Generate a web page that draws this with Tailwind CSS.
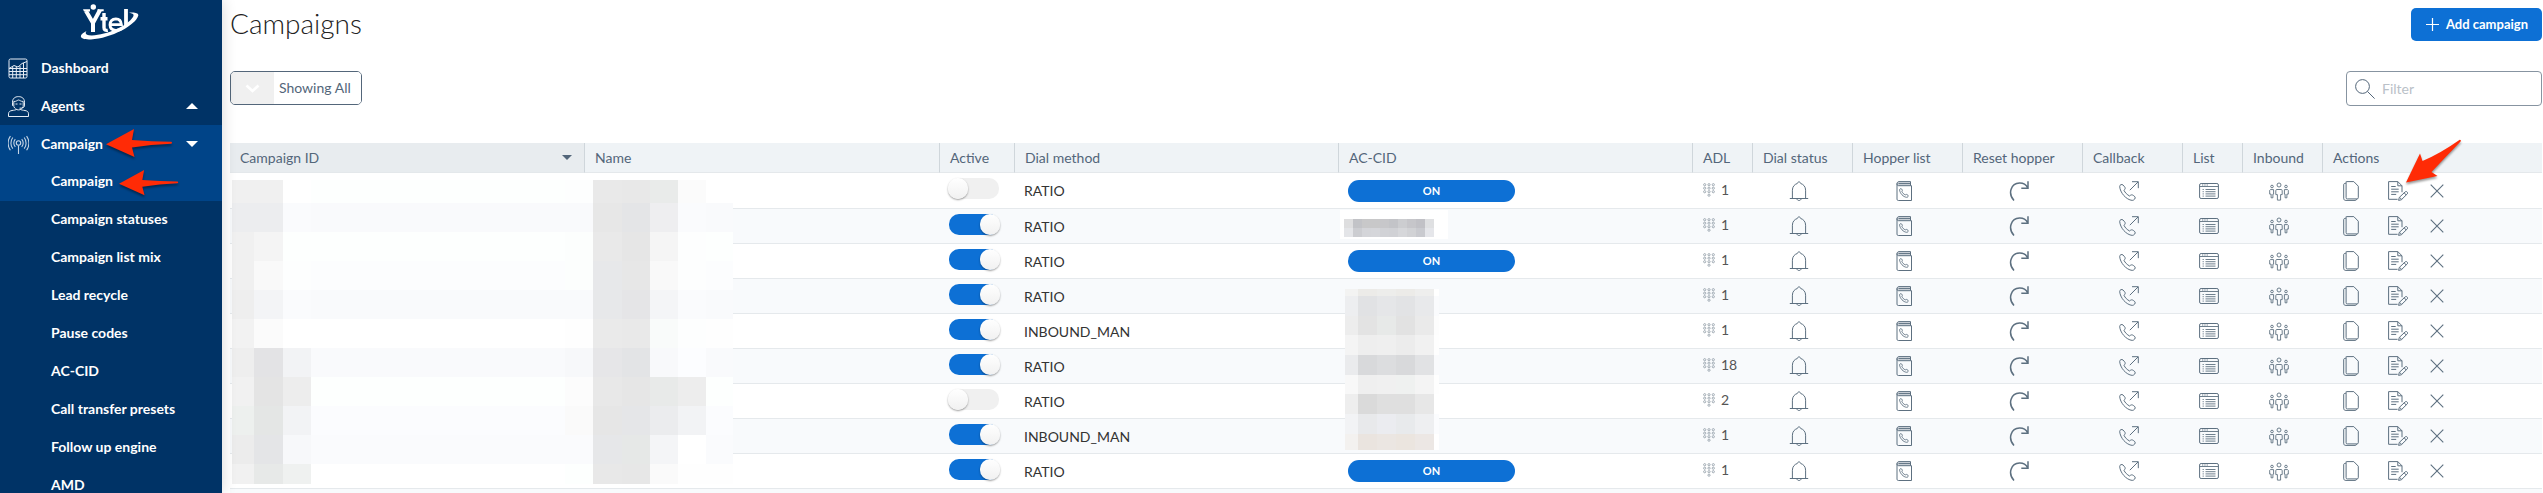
<!DOCTYPE html>
<html lang="en">

<head>
    <meta charset="UTF-8">
    <meta name="viewport" content="width=device-width, initial-scale=1.0">
    <title>Campaigns</title>
    <script src="https://cdn.jsdelivr.net/npm/@tailwindcss/browser@4"></script>
</head>

<body class="relative flex h-screen overflow-hidden bg-white font-['Lato',sans-serif] text-sm text-[#53667a]">
    <!-- Icon sprite -->
    <svg class="hidden">
        <symbol id="i-keypad" viewBox="0 0 12 14">
            <g fill="none" stroke="currentColor" stroke-width=".8">
                <circle cx="1.7" cy="1.7" r="1.1" /><circle cx="6" cy="1.7" r="1.1" /><circle cx="10.3" cy="1.7" r="1.1" />
                <circle cx="1.7" cy="5.2" r="1.1" /><circle cx="6" cy="5.2" r="1.1" /><circle cx="10.3" cy="5.2" r="1.1" />
                <circle cx="1.7" cy="8.7" r="1.1" /><circle cx="6" cy="8.7" r="1.1" /><circle cx="10.3" cy="8.7" r="1.1" />
                <circle cx="6" cy="12.2" r="1.1" />
            </g>
        </symbol>
        <symbol id="i-bell" viewBox="0 0 20 20">
            <path d="M.8 17.500h18.400M3.400 17.300V9.200C3.400 5.600 5.600 3.300 8.300 2.500 8.600 1.400 9.200.9 10 .9s1.400.5 1.700 1.600c2.700.8 4.900 3.100 4.900 6.700v8.100M7.800 17.700c.2 1.100 1.100 1.800 2.200 1.800s2-.7 2.200-1.800" fill="none" stroke="currentColor" />
        </symbol>
        <symbol id="i-phonebook" viewBox="0 0 20 20">
            <path d="M4.600 4.700C3.600 4.700 3 4 3 2.900 3 1.500 3.800.6 5 .6h11.500v4z" fill="#d3d9de" />
            <path d="M3 2.400v15.800c0 .8.5 1.300 1.300 1.300h13.200V4.700H4.600C3.600 4.700 3 4 3 2.900 3 1.500 3.800.6 5 .6h11.500v4M4.500 2.600h11.800" fill="none" stroke="currentColor" />
            <path d="M5.600 9.100c-.2-1.200 1.300-2 2.100-1 .7.900.9 1.500.2 2.200.4 1.500 1.900 2.900 3.400 3.600.9-.9 1.700-.5 2.600.3.900.9-.1 2.200-1.300 2.100-3.300-.3-6.600-3.900-7-7.200z" fill="none" stroke="currentColor" stroke-width=".9" />
        </symbol>
        <symbol id="i-reset" viewBox="0 0 20 20">
            <path d="M5 19.500C-1.500 12.500 2 2.200 10.500 2c3.500-.1 6.500 1.500 8 4.500M19 .3v6.900h-6.700" fill="none" stroke="currentColor" stroke-width="1.500" />
        </symbol>
        <symbol id="i-callback" viewBox="0 0 20 20">
            <path d="M.7 5.300C.5 4 2.900 2.800 4 4c2.800 2.900 2.700 3.300 1 5.300 1 2.300 3.200 4.500 5.600 5.700 1.800-1.700 2.900-1.600 5.300.8 1.100 1.200-.7 3.600-2.700 3.600C7.200 18.800.9 11.600.7 5.300zM10.800 9.200l8.300-8.300M13 .7h6.300v6.500" fill="none" stroke="currentColor" />
        </symbol>
        <symbol id="i-list" viewBox="0 0 20 20">
            <rect x=".6" y="2.500" width="18.800" height="15" rx="1.500" fill="none" stroke="currentColor" />
            <path d="M.6 5.500h18.800M3 4h1.300M5.300 4h1.300M7.600 4h1.300M3.600 8.500h1.200M6.500 8.500h10M3.600 10.700h1.200M6.500 10.700h10M3.600 12.900h1.200M6.500 12.900h10M3.600 15.100h1.200M6.500 15.100h10" fill="none" stroke="currentColor" stroke-width=".9" />
        </symbol>
        <symbol id="i-inbound" viewBox="0 0 20 20">
            <g fill="none" stroke="currentColor" stroke-width=".9">
                <circle cx="10" cy="4" r="2" /><circle cx="3" cy="5.500" r="1.300" /><circle cx="17" cy="5.500" r="1.300" />
                <path d="M7.900 8.500h4.200c.7 0 1.100.4 1.100 1.100v4h-1.600v5.500H8.400v-5.500H6.800v-4c0-.7.4-1.100 1.100-1.100z" />
                <path d="M1.400 8.600h3.200v4.500h-.7v3.700H2.100v-3.700H.7V9.300zM18.600 8.600h-3.200v4.500h.7v3.700h1.800v-3.700h1.400V9.300z" />
            </g>
        </symbol>
        <symbol id="i-copy" viewBox="0 0 16 20">
            <path d="M3.300.6h7.500l4.500 4.600v11.500c0 .8-.4 1.200-1.200 1.200H4.300c-.8 0-1.200-.4-1.200-1.200V.6M2.900 2.300C1.300 2.300.7 2.600.7 3.900v13.300c0 1.600.7 2.200 2.200 2.200h9.300c.9 0 1.300-.5 1.300-1.300" fill="none" stroke="currentColor" />
        </symbol>
        <symbol id="i-edit" viewBox="0 0 20 20">
            <path d="M9.600 18.300H.6V.6h9.200l4.200 4.200v6.400M9.800.6v4.200H14M3.200 5.500h4.500M3.200 8.200h7.500M3.200 10.800h7.500M3.200 13.400h5M10.600 19.400l.7-3 6-5.600c1.200-1 3.200 1 2 2.100l-6 5.900zM11.600 16.300l2 2.100M16.200 11.800l2 2.200" fill="none" stroke="currentColor" />
        </symbol>
        <symbol id="i-x" viewBox="0 0 14 14">
            <path d="M.7.700l12.600 12.600M13.300.7.700 13.300" fill="none" stroke="currentColor" stroke-width="1.100" />
        </symbol>
        <symbol id="i-arrow" viewBox="0 0 68 30">
            <path d="M0 15.300 28 0l-2 11q20 1.500 39 1.700a1 1 0 0 1 0 2Q45 15.500 26 18.500L28.500 28z" fill="#ff2b06" />
        </symbol>
    </svg>

    <aside class="z-10 w-[222px] shrink-0 overflow-hidden bg-[#003366] font-bold text-white shadow-[0_0_14px_rgba(0,0,0,0.16)]">
        <div class="flex h-[49px] justify-center pt-1 pr-0.5">
            <svg class="h-9 w-[60px]" viewBox="0 0 60 36" role="img" aria-label="Ytel">
                <g fill="none" stroke="#fff" stroke-width="4">
                    <path d="M6 7 13 19 20 6M13 18v10" />
                    <path d="M24 9v14.500q0 3.500 3.800 2.800M20.500 14.700h7" stroke-width="3.400" />
                    <path d="M30 20.600h11.400q-.4-5.600-5.500-5.700-5.700.3-5.900 6 .2 5.600 6.200 5.400 2.800 0 5.300-1.500" stroke-width="2.800" />
                    <path d="M46 5v16.500" stroke-width="3.800" />
                </g>
                <circle cx="13.300" cy="3" r="2.700" fill="#fff" />
                <path d="M3 5.200h7V7.500H4zM17.500 5.200h6.200v2h-6z" fill="#fff" />
                <path d="M6.500 27C-2.500 31.500-.5 36 11 35.400 31 34.500 56 21 58.300 11.500c.3-2.600-4.300-3.500-9.300-2.700 4.800.6 5.300 2 3.800 4.500C47.500 21.800 27 31 12 31.400c-6 .1-7.500-1.800-5.500-4.400z" fill="#fff" />
            </svg>
        </div>
        <nav>
            <a href="#" class="flex h-[38px] items-center pl-2">
                <svg class="mr-3 h-[21px] w-[21px]" viewBox="0 0 21 21" fill="none" stroke="#e6edf5">
                    <rect x="1" y="1" width="18" height="19" rx="1.500" />
                    <path d="M1 10.500l5-3 4 1.500 4-3.500 5-2M1 13.500h18M1 16.700h18M4.700 8.500V20M8.300 8.500V20M12 8v12M15.500 5v15M1 10.500h18" />
                </svg>
                Dashboard
            </a>
            <a href="#" class="flex h-[38px] items-center pl-2">
                <svg class="mr-3 h-[21px] w-[21px]" viewBox="0 0 21 21" fill="none" stroke="#e6edf5">
                    <path d="M.5 20.500v-2.700c0-2 1.500-3 3.500-3.300 2-.3 3.800-.4 4.300-1.200M20.500 20.500v-2.700c0-2-1.500-3-3.500-3.300-2-.3-3.800-.4-4.300-1.200M.5 20.500h20M4.500 9.800V6.200C4.500 2.500 7 .6 10.500.6s6 1.900 6 5.600v3.600M5.500 5.500c3 .2 4-1.500 5-1.500s2 1.500 5 1.500M5.800 6v4.500c1 2.300 2.600 3.400 4.700 3.400s3.700-1.100 4.700-3.400V6M16.500 9.500c0 2-1.500 2.700-5 2.700M7.500 8h2M11.500 8h2" />
                </svg>
                <span class="flex-1">Agents</span>
                <svg class="mr-6 h-[6px] w-[12px]" viewBox="0 0 12 6"><path d="M6 0l6 6H0z" fill="#fff" /></svg>
            </a>
            <div class="bg-[#004488]">
                <a href="#" class="flex h-[38px] items-center pl-2">
                    <svg class="mr-3 h-[21px] w-[21px]" viewBox="0 0 21 21" fill="none" stroke="#c5d5e6" stroke-width="1.100">
                        <circle cx="10.500" cy="9" r="2.200" />
                        <path d="M10.500 11.500v8.500M7.300 5.200c-2 2.200-2 5.600 0 7.700M13.700 5.200c2 2.200 2 5.600 0 7.700M4.800 3.500c-2.500 3.300-2.500 8 0 11.200M16.200 3.500c2.500 3.300 2.500 8 0 11.200M2.400 2c-2.800 4.300-2.800 10 0 14.200M18.600 2c2.800 4.300 2.800 10 0 14.200" />
                    </svg>
                    <span class="flex-1">Campaign</span>
                    <svg class="mr-6 h-[6px] w-[12px]" viewBox="0 0 12 6"><path d="M6 6L0 0h12z" fill="#fff" /></svg>
                </a>
                <a href="#" class="flex h-[38px] items-center pb-0.5 pl-[51px]">Campaign</a>
            </div>
            <a href="#" class="flex h-[38px] items-center pb-0.5 pl-[51px]">Campaign statuses</a>
            <a href="#" class="flex h-[38px] items-center pb-0.5 pl-[51px]">Campaign list mix</a>
            <a href="#" class="flex h-[38px] items-center pb-0.5 pl-[51px]">Lead recycle</a>
            <a href="#" class="flex h-[38px] items-center pb-0.5 pl-[51px]">Pause codes</a>
            <a href="#" class="flex h-[38px] items-center pb-0.5 pl-[51px]">AC-CID</a>
            <a href="#" class="flex h-[38px] items-center pb-0.5 pl-[51px]">Call transfer presets</a>
            <a href="#" class="flex h-[38px] items-center pb-0.5 pl-[51px]">Follow up engine</a>
            <a href="#" class="flex h-[38px] items-center pb-0.5 pl-[51px]">AMD</a>
        </nav>
    </aside>

    <main class="min-w-0 flex-1 pr-px pl-2">
        <div class="flex h-[49px] items-start justify-between">
            <h1 class="text-[28px] leading-[46px] font-light text-[#222]">Campaigns</h1>
            <button class="mt-2 flex h-[33px] items-center rounded-[5px] bg-[#0d70d5] pr-[14px] pl-[15px] text-[13px] font-bold text-white">
                <svg class="mr-[7px] h-[13px] w-[13px]" viewBox="0 0 13 13"><path d="M6.500 0v13M0 6.500h13" stroke="#fff" stroke-width="1.200" /></svg>
                Add campaign
            </button>
        </div>

        <div class="mt-[22px] flex h-[35px] items-start justify-between">
            <label class="flex h-[34px] overflow-hidden rounded-[5px] border border-[#53667a]" aria-label="Shown campaigns">
                <span class="flex w-[43px] items-center justify-center bg-[#f0f0f0]">
                    <svg class="h-[9px] w-[15px]" viewBox="0 0 15 9"><path d="M1.500 1.500l6 5.500 6-5.500" fill="none" stroke="#fff" stroke-width="2.600" /></svg>
                </span>
                <select class="w-[87px] appearance-none bg-white pl-[5px] outline-none">
                    <option>Showing All</option>
                </select>
            </label>
            <label class="flex h-[35px] w-[196px] items-center rounded-[4px] border border-[#8794a1] pl-2" aria-label="Filter campaigns">
                <svg class="mr-[7px] h-5 w-5" viewBox="0 0 20 20" fill="none" stroke="#53667a"><circle cx="7.500" cy="7.500" r="6.900" /><path d="M12.400 12.400l7.200 7.200" /></svg>
                <input type="search" placeholder="Filter" class="w-0 flex-1 bg-transparent outline-none placeholder:text-[#bac1c8]">
            </label>
        </div>

        <div class="relative mt-[37px]">
            <table class="w-full table-fixed border-separate border-spacing-0">
                <colgroup>
                    <col class="w-[355px]">
                    <col class="w-[355px]">
                    <col class="w-[75px]">
                    <col class="w-[324px]">
                    <col class="w-[354px]">
                    <col class="w-[60px]">
                    <col class="w-[100px]">
                    <col class="w-[110px]">
                    <col class="w-[120px]">
                    <col class="w-[100px]">
                    <col class="w-[60px]">
                    <col class="w-[80px]">
                    <col>
                </colgroup>
                <thead>
                    <tr class="h-[30px] bg-[#eff3f6] text-left *:border-r *:border-b *:border-b-[#e4e8eb] *:border-r-[#cfd6db] *:pl-[10px] *:font-normal *:last:border-r-0">
                        <th class="bg-[#e8ecef]">
                            <span class="flex items-center justify-between pr-3">Campaign ID
                                <svg class="h-[5px] w-[10px]" viewBox="0 0 10 5"><path d="M0 0h10L5 5z" fill="#53667a" /></svg>
                            </span>
                        </th>
                        <th>Name</th>
                        <th>Active</th>
                        <th>Dial method</th>
                        <th>AC-CID</th>
                        <th>ADL</th>
                        <th>Dial status</th>
                        <th>Hopper list</th>
                        <th>Reset hopper</th>
                        <th>Callback</th>
                        <th>List</th>
                        <th>Inbound</th>
                        <th>Actions</th>
                    </tr>
                </thead>
                <tbody id="rows"></tbody>
            </table>

            <!-- Redacted cells -->
            <div id="mask-ids" class="absolute top-[37px] left-[2px] grid grid-cols-[22px_29px_28px_254px_28px_29px_28px_28px_28px_27px] grid-rows-[23px_29px_29px_29px_29px_29px_29px_29px_29px_29px_20px]"></div>
            <div class="absolute top-[67px] left-[1110px] h-[29px] w-[108px] bg-white pt-[9px] pl-[4px]">
                <div id="mask-number" class="grid w-[90px] grid-cols-[repeat(10,9px)] grid-rows-[9px_9px]"></div>
            </div>
            <div id="mask-numbers" class="absolute top-[146px] left-[1115px] grid grid-cols-[13px_19px_19px_19px_19px_5px] grid-rows-[7px_20px_19px_20px_20px_19px_20px_20px_16px]"></div>
        </div>
    </main>

    <!-- Callout arrows -->
    <svg class="pointer-events-none absolute top-[129px] left-[106px] z-20 h-[30px] w-[68px] drop-shadow-[0_2px_1px_rgba(0,0,0,0.4)]"><use href="#i-arrow" /></svg>
    <svg class="pointer-events-none absolute top-[170px] left-[119px] z-20 h-[27px] w-[61px] drop-shadow-[0_2px_1px_rgba(0,0,0,0.4)]"><use href="#i-arrow" /></svg>
    <svg class="pointer-events-none absolute top-[139px] right-[80px] z-20 h-[45px] w-[58px] drop-shadow-[0_2px_1px_rgba(0,0,0,0.4)]" viewBox="0 0 58 45">
        <path d="M1 43.500 15 14.500l2.500 7.500Q36 14 54 1.200a1 1 0 0 1 1.600 1.300Q41 17.500 26.500 33l6 4z" fill="#ff2b06" />
    </svg>

    <script>
        const campaigns = [
            { active: false, method: 'RATIO', on: true, adl: 1 },
            { active: true, method: 'RATIO', on: false, adl: 1 },
            { active: true, method: 'RATIO', on: true, adl: 1 },
            { active: true, method: 'RATIO', on: false, adl: 1 },
            { active: true, method: 'INBOUND_MAN', on: false, adl: 1 },
            { active: true, method: 'RATIO', on: false, adl: 18 },
            { active: false, method: 'RATIO', on: false, adl: 2 },
            { active: true, method: 'INBOUND_MAN', on: false, adl: 1 },
            { active: true, method: 'RATIO', on: true, adl: 1 },
        ];

        const icon = (id, size) => `<svg class="${size}"><use href="#i-${id}"/></svg>`;
        const iconCell = (id, label) => `<td class="pr-[9px]"><button class="mx-auto block" aria-label="${label}">${icon(id, 'h-5 w-5')}</button></td>`;

        document.getElementById('rows').innerHTML = campaigns.map((c) => `
            <tr class="h-[35px] text-[#5d7080] first:h-[36px] even:bg-[#f8fafc] *:border-b *:border-[#e5e9ec]">
                <td></td>
                <td></td>
                <td class="align-top">
                    <input type="checkbox" role="switch" aria-label="Active" ${c.active ? 'checked' : ''}
                        class="relative mt-[5px] ml-[9px] block h-[21px] w-[50px] appearance-none rounded-[10px] bg-[#f0f0f0] before:absolute before:top-0 before:-left-px before:h-[21px] before:w-[20px] before:rounded-[10px] before:bg-linear-to-b before:from-white before:to-[#f1f1f1] before:shadow-[0_1px_2px_rgba(0,0,0,0.4)] checked:bg-[#0d70d5] checked:before:left-[31px]">
                </td>
                <td class="align-top"><span class="mt-2 ml-[9px] block leading-5 text-[#333]">${c.method}</span></td>
                <td>${c.on ? '<button class="ml-[9px] block h-[22px] w-[167px] rounded-[11px] bg-[#0d70d5] text-[11px] font-bold text-white">ON</button>' : ''}</td>
                <td><span class="flex items-center pb-0.5 pl-[10px]">${icon('keypad', 'mr-[6px] h-[14px] w-[12px] text-[#8e9aa5]')}<span class="text-[#555]">${c.adl}</span></span></td>
                ${iconCell('bell', 'Dial status')}
                ${iconCell('phonebook', 'Hopper list')}
                ${iconCell('reset', 'Reset hopper')}
                ${iconCell('callback', 'Callback')}
                ${iconCell('list', 'List')}
                ${iconCell('inbound', 'Inbound')}
                <td>
                    <span class="flex items-center pl-5">
                        <button class="mr-[29px]" aria-label="Copy">${icon('copy', 'h-5 w-4')}</button>
                        <button class="mr-[22px]" aria-label="Edit">${icon('edit', 'h-5 w-5')}</button>
                        <button aria-label="Delete">${icon('x', 'h-[14px] w-[14px]')}</button>
                    </span>
                </td>
            </tr>`).join('') + '<tr class="h-[35px] bg-[#f8fafc]"><td colspan="13"></td></tr>';

        function fillMask(id, rows) {
            document.getElementById(id).innerHTML = rows.join(' ').split(' ')
                .map((color) => `<i style="background:#${color}"></i>`).join('');
        }

        fillMask('mask-ids', [
            'f0f0f0 f0f0f0 ffffff fdfffe fdfefe e9e9e9 e8e8e8 e9ebea fbfbfb ffffff',
            'ecedef ecedef fafbfd f9fafc f9fafc e7e7e7 e4e5e7 eeeef0 fafbfd f9fafc',
            'f0f0f0 f4f4f4 fdfffe fdfffe fcfefd e9e9e9 e6e6e6 f5f5f5 fdfefe fdfffe',
            'f0f0f0 f9f9f9 fdfefe fcfdfe fcfefd e7e8ea e7e7e7 f9f9f9 fdfefe fcfdfe',
            'eeeeee f3f4f6 fafbfd f9fafc f9fafc e7e8ea e5e5e7 f4f5f7 fafbfd f9fafc',
            'f2f2f2 fbfbfb ffffff ffffff fefefe eaeaea e9e9e9 f9fbfa fdfefe fefefe',
            'eeeeee e3e3e5 f2f3f5 f9fafc f7f8fa e6e6e8 e3e4e6 f8f9fb fcfdff f9fafc',
            'f1f1f1 e4e4e4 ededed fdfffe fcfcfc e8e8e8 e6e6e6 e8eae9 ededed fdfffe',
            'edf0ee e4e6e5 f2f3f5 fbfcfe fafafa e6e6e6 e5e6e8 ebecee f2f3f5 fbfcfe',
            'ececec e4e5e7 f7f8fa fafbfd fafbfd e6e7e9 e6e8e7 f4f5f7 ffffff fafbfd',
            'f1f1f1 e7e9e8 eff1f0 ffffff fdfffe e8e8e8 e7e7e7 fafafa fefefe fefefe',
        ]);
        fillMask('mask-number', [
            'dededf c2c3c7 c8c8c9 c8c8c9 c7c7ca c3c4c8 cccdd0 c6c6ca c1c1c6 dfe0e2',
            'e4e5e8 cccdd1 d4d5d9 d5d6da d1d2d6 d0d1d5 d6d7da d1d2d5 c9cacf e5e6ea',
        ]);
        fillMask('mask-numbers', [
            'f3f3f2 ecebe8 ededeb ecebe8 eeeeed ffffff',
            'edeef0 e1e2e4 e5e6e8 e2e3e5 e8e9eb fafbfd',
            'ededed e3e3e3 e7e9e8 e2e2e2 eaeaea fdfdfd',
            'f4f4f4 eeeeee efefef ececec f1f1f1 fefefe',
            'eaebed d8d9db dcdddf d8d9db e1e2e4 f9fafc',
            'f8f8f8 efefef f0f0f0 eff1f0 f4f4f4 fefefe',
            'eeeeee dadada dfdfdf dfdfdf e7e7e7 ffffff',
            'f2f3f5 e8e9eb ebecf0 e8eaec eeeff1 fbfcfe',
            'f3f1ef eae4df ebe6e2 ebe5df ece7e4 ffffff',
        ]);
    </script>
</body>

</html>
